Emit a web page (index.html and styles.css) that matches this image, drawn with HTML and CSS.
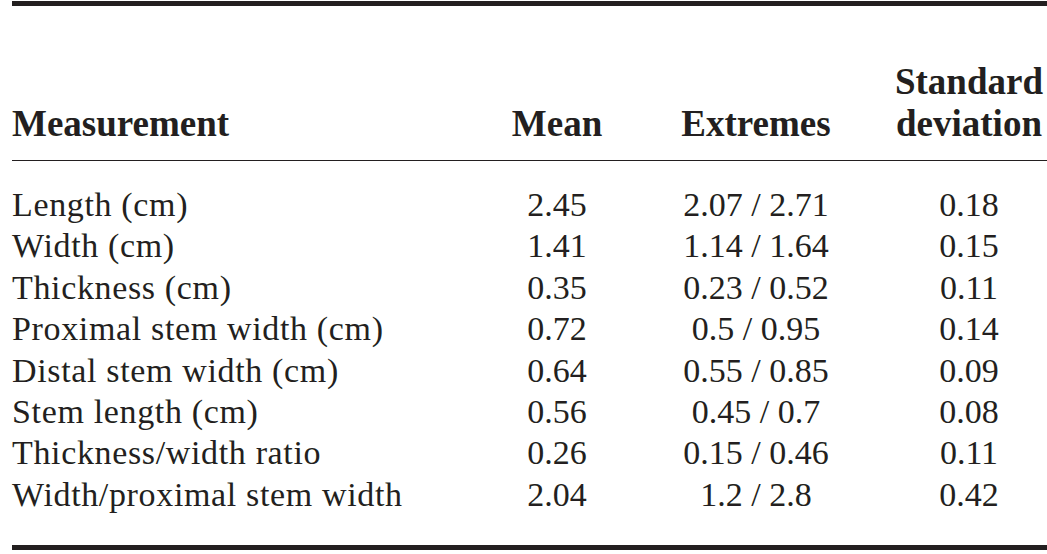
FILE: index.html
```html
<!DOCTYPE html>
<html lang="en">
<head>
<meta charset="utf-8">
<title>Measurements</title>
<link rel="stylesheet" href="styles.css">
</head>
<body>
<table class="data">
  <colgroup>
    <col class="c-label">
    <col class="c-mean">
    <col class="c-ext">
    <col class="c-sd">
  </colgroup>
  <thead>
    <tr>
      <th class="label">Measurement</th>
      <th>Mean</th>
      <th>Extremes</th>
      <th class="sd">Standard<br>deviation</th>
    </tr>
  </thead>
  <tbody>
    <tr class="first"><td class="label">Length (cm)</td><td>2.45</td><td>2.07 / 2.71</td><td class="sd">0.18</td></tr>
    <tr><td class="label">Width (cm)</td><td>1.41</td><td>1.14 / 1.64</td><td class="sd">0.15</td></tr>
    <tr><td class="label">Thickness (cm)</td><td>0.35</td><td>0.23 / 0.52</td><td class="sd">0.11</td></tr>
    <tr><td class="label">Proximal stem width (cm)</td><td>0.72</td><td>0.5 / 0.95</td><td class="sd">0.14</td></tr>
    <tr><td class="label">Distal stem width (cm)</td><td>0.64</td><td>0.55 / 0.85</td><td class="sd">0.09</td></tr>
    <tr><td class="label">Stem length (cm)</td><td>0.56</td><td>0.45 / 0.7</td><td class="sd">0.08</td></tr>
    <tr><td class="label">Thickness/width ratio</td><td>0.26</td><td>0.15 / 0.46</td><td class="sd">0.11</td></tr>
    <tr class="last"><td class="label">Width/proximal stem width</td><td>2.04</td><td>1.2 / 2.8</td><td class="sd">0.42</td></tr>
  </tbody>
</table>
</body>
</html>
```
FILE: styles.css
```css
html, body {
  margin: 0;
  background: #ffffff;
}
body {
  padding: 1px 0 0 12px;
  overflow: hidden;
  font-family: "Liberation Serif", "Times New Roman", serif;
  color: #231f20;
}
.data {
  width: 1035px;
  table-layout: fixed;
  border-collapse: collapse;
  border-top: 5px solid #231f20;
  border-bottom: 5px solid #231f20;
}
.c-label { width: 458px; }
.c-mean { width: 174px; }
.c-ext { width: 224px; }
.c-sd { width: 179px; }

.data th {
  font-size: 37px;
  font-weight: bold;
  line-height: 42px;
  text-align: center;
  vertical-align: bottom;
  padding: 55px 0 15px;
  border-bottom: 1px solid #231f20;
  white-space: nowrap;
}
.data td {
  font-size: 34px;
  line-height: 41.4px;
  text-align: center;
  padding: 0;
  white-space: nowrap;
}
.data td.label {
  letter-spacing: 0.65px;
}
.data .label {
  text-align: left;
}
.data .sd {
  padding-left: 23px;
}
.data tr.first td {
  padding-top: 23px;
}
.data tr.last td {
  padding-bottom: 30px;
}
```
